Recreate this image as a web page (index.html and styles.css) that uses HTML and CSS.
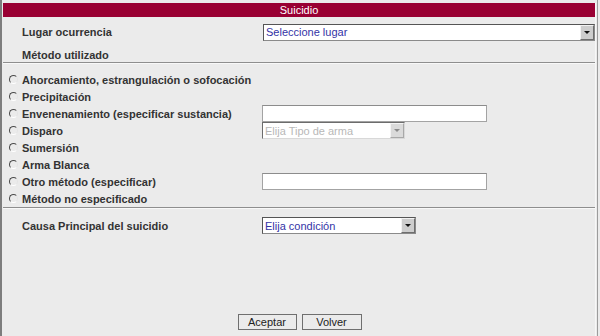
FILE: index.html
```html
<!DOCTYPE html>
<html lang="es">
<head>
  <meta charset="UTF-8">
  <meta name="viewport" content="width=device-width, initial-scale=1.0">
  <title>Suicidio</title>
  <link rel="stylesheet" href="styles.css">
</head>
<body>
  <div class="frame">
    <div class="panel">
      <div class="title">Suicidio</div>

      <div class="row row-lugar">
        <span class="label">Lugar ocurrencia</span>
        <div class="dropdown dd-lugar">
          <select id="lugar"><option>Seleccione lugar</option></select>
          <span class="arrow"></span>
        </div>
      </div>

      <div class="row row-section">
        <span class="label">Método utilizado</span>
      </div>
      <div class="sep"></div>

      <form class="methods" id="metodoForm">
        <div class="method">
          <label class="opt"><input type="radio" name="metodo"><span>Ahorcamiento, estrangulación o sofocación</span></label>
        </div>
        <div class="method">
          <label class="opt"><input type="radio" name="metodo"><span>Precipitación</span></label>
        </div>
        <div class="method">
          <label class="opt"><input type="radio" name="metodo"><span>Envenenamiento (especificar sustancia)</span></label>
          <input type="text" class="field" id="sustancia">
        </div>
        <div class="method">
          <label class="opt"><input type="radio" name="metodo"><span>Disparo</span></label>
          <div class="dropdown dd-arma disabled">
            <select id="arma" disabled><option>Elija Tipo de arma</option></select>
            <span class="arrow"></span>
          </div>
        </div>
        <div class="method">
          <label class="opt"><input type="radio" name="metodo"><span>Sumersión</span></label>
        </div>
        <div class="method">
          <label class="opt"><input type="radio" name="metodo"><span>Arma Blanca</span></label>
        </div>
        <div class="method">
          <label class="opt"><input type="radio" name="metodo"><span>Otro método (especificar)</span></label>
          <input type="text" class="field" id="otroMetodo">
        </div>
        <div class="method">
          <label class="opt"><input type="radio" name="metodo"><span>Método no especificado</span></label>
        </div>
      </form>
      <div class="sep"></div>

      <div class="row row-causa">
        <span class="label">Causa Principal del suicidio</span>
        <div class="dropdown dd-causa">
          <select id="causa"><option>Elija condición</option></select>
          <span class="arrow"></span>
        </div>
      </div>

      <div class="actions">
        <button type="button" class="btn btn-aceptar">Aceptar</button>
        <button type="button" class="btn btn-volver">Volver</button>
      </div>
    </div>
  </div>
</body>
</html>
```

FILE: styles.css
```css
body {
  margin: 0;
  background: #ebebeb;
  font-family: "Liberation Sans", Arial, sans-serif;
  font-size: 11px;
  color: #333;
}
.frame {
  box-sizing: border-box;
  width: 598px;
  height: 336px;
  padding-top: 3px;
  border-left: 2px solid #7d7d7d;
  border-right: 1px solid #9c9c9c;
  background: #ebebeb;
}
.panel {
  box-sizing: border-box;
  height: 333px;
  margin: 0 1px;
  display: flex;
  flex-direction: column;
  border-right: 1px solid #f7f7f7;
}
.title {
  height: 14px;
  line-height: 14px;
  background: #990033;
  color: #fff;
  text-align: center;
}
.row {
  display: grid;
  grid-template-columns: 259px 1fr;
  align-items: center;
}
.label {
  padding-left: 19px;
  font-weight: bold;
}
.row-lugar {
  height: 30px;
}
.row-section {
  padding-top: 2px;
  line-height: 13px;
}
.row-causa {
  height: 33px;
}
.sep {
  height: 0;
  border-top: 1px solid #8e8e8e;
  border-bottom: 1px solid #f8f8f8;
}
.methods {
  margin: 0;
  padding-top: 7px;
}
.method {
  display: grid;
  grid-template-columns: 259px 1fr;
  align-items: center;
  height: 17px;
}
.opt {
  display: flex;
  align-items: center;
  gap: 4px;
  padding-left: 6px;
  font-weight: bold;
  white-space: nowrap;
}
.opt input {
  appearance: none;
  -webkit-appearance: none;
  box-sizing: border-box;
  width: 9px;
  height: 9px;
  margin: 0;
  border-radius: 50%;
  border: 1px solid;
  border-color: #4a4a4a #e4e4e4 #ffffff #4a4a4a;
  background: transparent;
}
.field {
  box-sizing: border-box;
  width: 225px;
  height: 17px;
  margin: 0;
  padding: 0 3px;
  border: 1px solid #a3a3a3;
  border-top-color: #8c8c8c;
  background: #fff;
  font: 11px "Liberation Sans", Arial, sans-serif;
}
.dropdown {
  box-sizing: border-box;
  display: flex;
  height: 17px;
  border: 1px solid #8a8a8a;
  border-top-color: #555;
  border-left-color: #555;
  background: #fff;
}
.dropdown select {
  flex: 1;
  min-width: 0;
  appearance: none;
  -webkit-appearance: none;
  margin: 0;
  padding: 0 2px;
  border: none;
  background: transparent;
  color: #3333a6;
  font: 11px "Liberation Sans", Arial, sans-serif;
  outline: none;
}
.arrow {
  box-sizing: border-box;
  width: 14px;
  border: 1px solid;
  border-color: #f2f2f2 #6e6e6e #6e6e6e #f2f2f2;
  background: #cdcdcd;
  display: flex;
  align-items: center;
  justify-content: center;
}
.arrow::after {
  content: "";
  border-left: 3px solid transparent;
  border-right: 3px solid transparent;
  border-top: 3px solid #111;
}
.dd-lugar {
  width: 332px;
  margin-left: 1px;
}
.dd-arma {
  width: 143px;
  border-color: #d8d8d8;
  border-top-color: #6c6c6c;
  border-left-color: #6c6c6c;
}
.dd-arma select {
  color: #9a9a9a;
}
.dd-arma .arrow {
  background: #dadada;
  border-color: #f4f4f4 #a8a8a8 #a8a8a8 #f4f4f4;
}
.dd-arma .arrow::after {
  border-top-color: #8a8a8a;
}
.dd-causa {
  width: 154px;
}
.actions {
  margin-top: auto;
  margin-bottom: 6px;
  display: flex;
  justify-content: center;
  gap: 5px;
  padding-left: 1px;
}
.btn {
  box-sizing: border-box;
  height: 16px;
  padding: 0;
  border: 1px solid #6f6f6f;
  background: #ebebeb;
  color: #222;
  font: 11px "Liberation Sans", Arial, sans-serif;
  line-height: 14px;
  cursor: pointer;
}
.btn-aceptar {
  width: 59px;
}
.btn-volver {
  width: 60px;
}
```
